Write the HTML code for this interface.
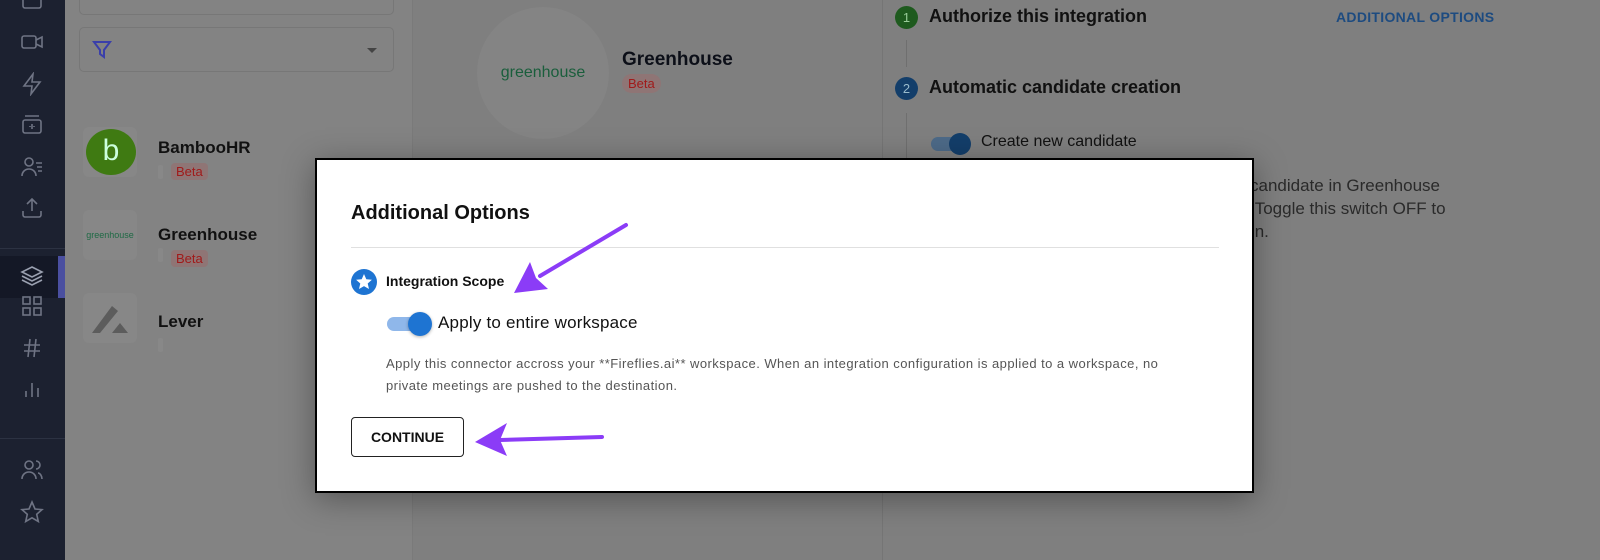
<!DOCTYPE html>
<html><head><meta charset="utf-8"><style>
*{margin:0;padding:0;box-sizing:border-box}
body{width:1600px;height:560px;overflow:hidden;background:#7f7f7f;font-family:"Liberation Sans",sans-serif;position:relative}
.a{position:absolute}
.sb{left:0;top:0;width:65px;height:560px;background:#1c2130}
.ic{position:absolute;left:20px;width:24px;height:24px}
.ic svg{width:24px;height:24px;fill:none;stroke:#6f7484;stroke-width:1.6}
.lp{left:65px;top:0;width:347px;height:560px;background:#838383}
.rp{left:882px;top:0;width:1px;height:560px;background:#757575}
.txt{color:#111;font-weight:bold}
.beta{background:#8f7575;color:#a01a1a;font-size:13px;padding:1px 5px;border-radius:4px}
</style></head><body>
<div class="a sb">
 <div class="a" style="left:0;top:248px;width:65px;height:1px;background:#2c3242"></div>
 <div class="a" style="left:0;top:256px;width:65px;height:42px;background:#141826"></div>
 <div class="a" style="left:58px;top:256px;width:7px;height:42px;background:#4a4fa0"></div>
 <div class="a" style="left:0;top:438px;width:65px;height:1px;background:#2c3242"></div>
 <div class="ic" style="top:-10px"><svg viewBox="0 0 24 24"><rect x="3" y="4" width="18" height="14" rx="2"/></svg></div>
 <div class="ic" style="top:30px"><svg viewBox="0 0 24 24"><rect x="2" y="6" width="14" height="12" rx="2"/><path d="M16 10l6-3v10l-6-3"/></svg></div>
 <div class="ic" style="top:72px"><svg viewBox="0 0 24 24"><path d="M13 2L4 14h8l-1 8 9-12h-8z"/></svg></div>
 <div class="ic" style="top:113px"><svg viewBox="0 0 24 24"><rect x="3" y="7" width="18" height="13" rx="2"/><path d="M5 3h14M12 11v5M10 13v1M14 13v1"/></svg></div>
 <div class="ic" style="top:155px"><svg viewBox="0 0 24 24"><circle cx="9" cy="7" r="4"/><path d="M2 21c0-4 3-7 7-7s7 3 7 7M16 8h6M17 12h5M18 16h4"/></svg></div>
 <div class="ic" style="top:196px"><svg viewBox="0 0 24 24"><path d="M12 15V3M7 8l5-5 5 5M3 15v4a2 2 0 002 2h14a2 2 0 002-2v-4"/></svg></div>
 <div class="ic" style="top:264px"><svg viewBox="0 0 24 24" style="stroke:#9aa0b0"><path d="M12 3l10 5-10 5L2 8z M2 12l10 5 10-5 M2 16l10 5 10-5"/></svg></div>
 <div class="ic" style="top:294px"><svg viewBox="0 0 24 24"><rect x="3" y="3" width="7" height="7"/><rect x="14" y="3" width="7" height="7"/><rect x="3" y="14" width="7" height="7"/><rect x="14" y="14" width="7" height="7"/></svg></div>
 <div class="ic" style="top:336px"><svg viewBox="0 0 24 24"><path d="M4 9h16M4 15h16M10 3L8 21M16 3l-2 18"/></svg></div>
 <div class="ic" style="top:377px"><svg viewBox="0 0 24 24"><path d="M6 20v-6M12 20V6M18 20v-9"/></svg></div>
 <div class="ic" style="top:458px"><svg viewBox="0 0 24 24"><circle cx="9" cy="7" r="4"/><path d="M2 21c0-4 3-7 7-7s7 3 7 7M16 3a4 4 0 010 8M22 21c0-3-2-6-4-6"/></svg></div>
 <div class="ic" style="top:500px"><svg viewBox="0 0 24 24"><path d="M12 2l3 7 7 .6-5.3 4.7 1.6 7.2L12 17.8 5.7 21.5l1.6-7.2L2 9.6 9 9z"/></svg></div>
</div>
<div class="a lp">
 <div class="a" style="left:14px;top:-10px;width:315px;height:25px;border:1.5px solid #777;border-radius:5px"></div>
 <div class="a" style="left:14px;top:27px;width:315px;height:45px;border:1.5px solid #777;border-radius:5px"></div>
 <svg class="a" style="left:27px;top:40px" width="20" height="20" viewBox="0 0 20 20"><path d="M2 2h16l-6 8v7l-4-3v-4z" fill="none" stroke="#3a3faa" stroke-width="2"/></svg>
 <div class="a" style="left:302px;top:48px;border:5px solid transparent;border-top-color:#444"></div>
 <div class="a" style="left:18px;top:127px;width:54px;height:50px;background:#878787;border-radius:6px"></div>
 <div class="a" style="left:21px;top:129px;width:50px;height:46px;background:#3f7a12;border-radius:50%;color:#cfd;font-size:30px;text-align:center;line-height:44px">b</div>
 <div class="a txt" style="left:93px;top:138px;font-size:17px">BambooHR</div>
 <div class="a" style="left:93px;top:165px;width:5px;height:14px;background:#888;border-radius:2px"></div>
 <div class="a beta" style="left:106px;top:163px">Beta</div>
 <div class="a" style="left:18px;top:210px;width:54px;height:50px;background:#878787;border-radius:6px;color:#1f6a45;font-size:9px;line-height:50px;text-align:center">greenhouse</div>
 <div class="a txt" style="left:93px;top:225px;font-size:17px">Greenhouse</div>
 <div class="a" style="left:93px;top:248px;width:5px;height:14px;background:#888;border-radius:2px"></div>
 <div class="a beta" style="left:106px;top:250px">Beta</div>
 <div class="a" style="left:18px;top:293px;width:54px;height:50px;background:#878787;border-radius:6px"></div>
 <svg class="a" style="left:25px;top:300px" width="40" height="36"><path d="M2 33L22 6l6 5L10 33z" fill="#5c5c5c"/><path d="M22 33l8-10 8 10z" fill="#5c5c5c"/></svg>
 <div class="a txt" style="left:93px;top:312px;font-size:17px">Lever</div>
 <div class="a" style="left:93px;top:338px;width:5px;height:14px;background:#888;border-radius:2px"></div>
</div>
<div class="a" style="left:412px;top:0;width:1px;height:560px;background:#7a7a7a"></div>
<div class="a" style="left:477px;top:7px;width:132px;height:132px;border-radius:50%;background:#848484;color:#1a5e3c;font-size:16px;line-height:132px;text-align:center">greenhouse</div>
<div class="a txt" style="left:622px;top:49px;font-size:19px;color:#0c0f18">Greenhouse</div>
<div class="a beta" style="left:622px;top:74px;border-radius:10px;padding:2px 6px">Beta</div>
<div class="a rp"></div>
<div class="a" style="left:906px;top:40px;width:1px;height:27px;background:#6f6f6f"></div>
<div class="a" style="left:906px;top:113px;width:1px;height:50px;background:#6f6f6f"></div>
<div class="a" style="left:895px;top:6px;width:23px;height:23px;border-radius:50%;background:#1e5a1e;color:#9c9;font-size:13px;text-align:center;line-height:23px">1</div>
<div class="a" style="left:929px;top:6px;font-size:18px;font-weight:bold;color:#111">Authorize this integration</div>
<div class="a" style="left:1336px;top:9px;font-size:14px;font-weight:bold;color:#1d4b80;letter-spacing:.3px">ADDITIONAL OPTIONS</div>
<div class="a" style="left:895px;top:77px;width:23px;height:23px;border-radius:50%;background:#133e6a;color:#9bc;font-size:13px;text-align:center;line-height:23px">2</div>
<div class="a" style="left:929px;top:77px;font-size:18px;font-weight:bold;color:#111">Automatic candidate creation</div>
<div class="a" style="left:931px;top:137px;width:34px;height:14px;border-radius:7px;background:#4d6a88"></div>
<div class="a" style="left:949px;top:133px;width:22px;height:22px;border-radius:50%;background:#133e6a"></div>
<div class="a" style="left:981px;top:133px;font-size:16px;color:#111">Create new candidate</div>
<div class="a" style="left:1250px;top:174px;font-size:17px;color:#2a2a2a;line-height:23px">candidate in Greenhouse<br>&nbsp;Toggle this switch OFF to<br>&nbsp;n.</div>

<div class="a" style="left:315px;top:158px;width:939px;height:335px;background:#fff;border:2px solid #000;box-shadow:0 6px 30px rgba(0,0,0,.35)">
 <div class="a" style="left:34px;top:42px;font-size:20px;font-weight:bold;color:#111">Additional Options</div>
 <div class="a" style="left:34px;top:87px;width:868px;height:1px;background:#e0e0e0"></div>
 <svg class="a" style="left:34px;top:109px" width="26" height="26" viewBox="0 0 26 26"><circle cx="13" cy="13" r="13" fill="#1e74d2"/><path d="M13 5l2.3 5.2 5.6.5-4.2 3.8 1.3 5.5L13 17.1 8 20l1.3-5.5-4.2-3.8 5.6-.5z" fill="#fff"/></svg>
 <div class="a" style="left:69px;top:113px;font-size:14px;font-weight:bold;color:#111">Integration Scope</div>
 <div class="a" style="left:70px;top:157px;width:36px;height:14px;border-radius:7px;background:#8fb7ea"></div>
 <div class="a" style="left:91px;top:152px;width:24px;height:24px;border-radius:50%;background:#1e74d2;box-shadow:0 1px 3px rgba(0,0,0,.3)"></div>
 <div class="a" style="left:121px;top:153px;font-size:17px;color:#111;letter-spacing:.2px">Apply to entire workspace</div>
 <div class="a" style="left:69px;top:193px;font-size:13px;color:#555;line-height:22px;letter-spacing:.45px;white-space:nowrap">Apply this connector accross your **Fireflies.ai** workspace. When an integration configuration is applied to a workspace, no<br>private meetings are pushed to the destination.</div>
 <div class="a" style="left:34px;top:257px;width:113px;height:40px;border:1px solid #222;border-radius:4px;font-size:14px;font-weight:bold;color:#111;text-align:center;line-height:38px">CONTINUE</div>
</div>
<svg class="a" style="left:0;top:0" width="1600" height="560">
 <path d="M626 225 L540 276" stroke="#8b3cf7" stroke-width="4" stroke-linecap="round"/>
 <path d="M514 293 L530 262 L536 278 L548 289 Z" fill="#8b3cf7"/>
 <path d="M602 437 L500 440" stroke="#8b3cf7" stroke-width="4" stroke-linecap="round"/>
 <path d="M475 442 L507 423 L500 440 L507 456 Z" fill="#8b3cf7"/>
</svg>
</body></html>
